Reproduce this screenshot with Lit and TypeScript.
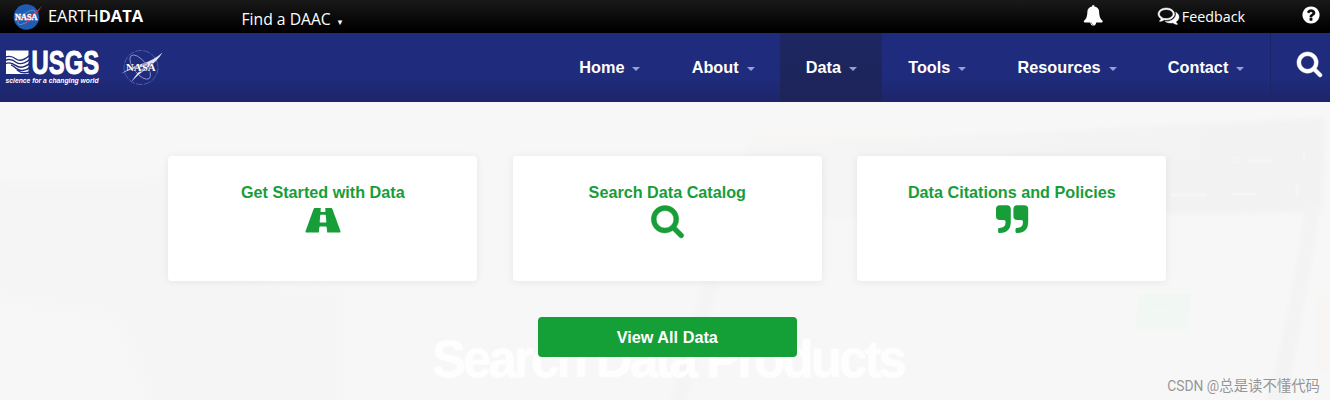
import { LitElement, html, svg, css } from "lit";
import { customElement } from "lit/decorators.js";

const PATHS = {
  search:
    "M1216 832q0-185-131.5-316.5t-316.5-131.5-316.5 131.5-131.5 316.5 131.5 316.5 316.5 131.5 316.5-131.5 131.5-316.5zm512 832q0 52-38 90t-90 38q-54 0-90-38l-343-342q-179 124-399 124-143 0-273.5-55.5t-225-150-150-225-55.5-273.5 55.5-273.5 150-225 225-150 273.5-55.5 273.5 55.5 225 150 150 225 55.5 273.5q0 220-124 399l343 343q37 37 37 90z",
  bell:
    "M912 1696q0-16-16-16-59 0-101.5-42.5t-42.5-101.5q0-16-16-16t-16 16q0 73 51.5 124.5t124.5 51.5q16 0 16-16zm816-288q0 52-38 90t-90 38h-448q0 106-75 181t-181 75-181-75-75-181h-448q-52 0-90-38t-38-90q50-42 91-88t85-119.5 74.5-158.5 50-206 19.5-260q0-152 117-282.5t307-158.5q-8-19-8-39 0-40 28-68t68-28 68 28 28 68q0 20-8 39 190 28 307 158.5t117 282.5q0 139 19.5 260t50 206 74.5 158.5 85 119.5 91 88z",
  comments:
    "M704 384q-153 0-286 52t-211.5 141-78.5 191q0 82 53 158t149 132l97 56-35 84q34-20 62-39l44-31 53 10q78 14 153 14 153 0 286-52t211.5-141 78.5-191-78.5-191-211.5-141-286-52zm0-128q191 0 353.5 68.5t256.5 186.5 94 257-94 257-256.5 186.5-353.5 68.5q-86 0-176-16-124 88-278 128-36 9-86 16h-3q-11 0-20.5-8t-11.5-21q-1-3-1-6.5t.5-6.5 2-6l2.5-5 3.5-5.5 4-5 4.5-5 4-4.5q5-6 23-25t26-29.5 22.5-29 25-38.5 20.5-44q-124-72-195-177t-71-224q0-139 94-257t256.5-186.5 353.5-68.5zm822 1169q10 24 20.5 44t25 38.5 22.5 29 26 29.5 23 25q1 1 4 4.5t4.5 5 4 5 3.5 5.5l2.5 5 2 6 .5 6.5-1 6.5q-3 14-13 22t-22 7q-50-7-86-16-154-40-278-128-90 16-176 16-271 0-472-132 58 4 88 4 161 0 309-45t264-129q125-92 192-212t67-254q0-77-23-152 129 71 204 178t75 230q0 120-71 224.5t-195 176.5z",
  help:
    "M1024 1376v-192q0-14-9-23t-23-9h-192q-14 0-23 9t-9 23v192q0 14 9 23t23 9h192q14 0 23-9t9-23zm256-672q0-88-55.5-163t-138.5-116-170-41q-243 0-371 213-15 24 8 42l132 100q7 6 19 6 16 0 25-12 53-68 86-92 34-24 86-24 48 0 85.5 26t37.5 59q0 38-20 61t-68 45q-63 28-115.5 86.5t-52.5 125.5v36q0 14 9 23t23 9h192q14 0 23-9t9-23q0-19 21.5-49.5t54.5-49.5q32-18 49-28.5t46-35 44.5-48 28-60.5 12.5-81zm384 192q0 209-103 385.5t-279.5 279.5-385.5 103-385.5-103-279.5-279.5-103-385.5 103-385.5 279.5-279.5 385.5-103 385.5 103 279.5 279.5 103 385.5z",
};

const icon = (name: keyof typeof PATHS, size: number, stroke = 0) => html`
  <svg width=${size} height=${size} viewBox="0 0 1792 1792" overflow="visible" fill="currentColor" stroke="currentColor" stroke-width=${stroke}><path d=${PATHS[name]} /></svg>
`;

const roadIcon = html`
  <svg width="36" height="33" viewBox="0 0 36 33" fill="currentColor">
    <path fill-rule="evenodd" d="M9.6 3H15.8L15.5 6.2Q15.5 7 16.3 7H19.7Q20.5 7 20.5 6.2L20.2 3H26.4Q27 3 27.3 3.8L35.4 26Q35.9 27.6 34.8 27.6H22.2L21.7 22.4Q21.6 21.4 20.7 21.4H15.3Q14.4 21.4 14.3 22.4L13.8 27.6H1.2Q.1 27.6 .6 26L8.7 3.8Q9 3 9.6 3ZM15.9 9.7Q15.2 9.7 15.2 10.4L14.7 16.4Q14.6 17.6 15.4 17.6H20.6Q21.4 17.6 21.3 16.4L20.8 10.4Q20.8 9.7 20.1 9.7Z" />
  </svg>
`;

const quoteIcon = html`
  <svg width="34" height="33" viewBox="0 0 34 33" fill="currentColor">
    <path d="M4.8.2H12Q15.8.2 15.8 4.2V16.8Q15.8 27.8 5 28H4.3Q3.1 28 3.1 26.8V24.2Q3.1 23 4.3 23Q10.6 22.8 10.6 17Q10.6 15 8.9 15H4.8Q1 15 1 11.2V4.2Q1 .2 4.8.2Z" />
    <path d="M22.2.2H29.4Q33.2.2 33.2 4.2V16.8Q33.2 27.8 22.4 28H21.7Q20.5 28 20.5 26.8V24.2Q20.5 23 21.7 23Q28 22.8 28 17Q28 15 26.3 15H22.2Q18.4 15 18.4 11.2V4.2Q18.4.2 22.2.2Z" />
  </svg>
`;

const nasaBadge = html`
  <svg width="32" height="26" viewBox="0 0 32 26">
    <circle cx="13.4" cy="13" r="12.7" fill="#1d5cb0" />
    <ellipse cx="13.4" cy="13" rx="10.5" ry="4" fill="none" stroke="#7fa6de" stroke-width=".6" transform="rotate(-38 14 13)" />
    <path d="M.5 18.5Q9 14 18 10.8Q24 8 29 1.5Q25 9.5 18 14.5Q15 17.5 12.5 21.5Q13.5 17 16.5 13Q9 15.5 .5 18.5Z" fill="#d8304a" />
    <text x="2" y="15.7" font-family="Liberation Serif, serif" font-weight="700" font-size="7.8" textLength="22.5" lengthAdjust="spacingAndGlyphs" fill="#fff" stroke="#fff" stroke-width=".3">NASA</text>
  </svg>
`;

const usgsLogo = html`
  <svg width="96" height="40" viewBox="0 0 96 40">
    <rect x="1" y="2.5" width="22.5" height="23.5" fill="#fff" />
    <g fill="none" stroke="#1f2b7d" stroke-width="1.4">
      <path d="M0 9.4C4 7.4 7 8 11 11S19 12.5 25 7" />
      <path d="M0 12.6C4 10.6 7 11.2 11 14.2S19 16 25 11.2" />
      <path d="M0 15.8C4 13.8 7 14.6 11 17.6S19 19.7 25 15.4" />
      <path d="M6 16.8C9 18 10 20 13 21.5S21 22.6 25 19.4" />
      <path d="M12 22C15 24.6 20 25.6 25 23.6" />
    </g>
    <text x="26.6" y="26" font-family="Liberation Sans, sans-serif" font-weight="700" font-size="32.5" textLength="67.5" lengthAdjust="spacingAndGlyphs" fill="#fff" stroke="#fff" stroke-width="1">USGS</text>
    <text x=".6" y="35" font-family="Liberation Sans, sans-serif" font-weight="700" font-style="italic" font-size="8" textLength="93" lengthAdjust="spacingAndGlyphs" fill="#fff">science for a changing world</text>
  </svg>
`;

const nasaOutline = html`
  <svg width="44" height="38" viewBox="0 0 44 38">
    <circle cx="20" cy="19.5" r="17" fill="none" stroke="#5d68af" stroke-width=".8" stroke-dasharray="7 1.2" />
    <ellipse cx="19" cy="19.5" rx="14.5" ry="6.5" fill="none" stroke="#8d96cd" stroke-width=".9" transform="rotate(52 19.5 19.5)" />
    <path d="M.5 25.5Q9 19 22 15.5Q33 12 41.5 4.5Q36 14 25 21Q17 26.5 10 34Q15 26 23 18.5Q9 21 .5 25.5Z" fill="#dfe2f5" />
    <text x="5" y="23" font-family="Liberation Serif, serif" font-weight="700" font-size="10.5" textLength="29.5" lengthAdjust="spacingAndGlyphs" fill="#fff" stroke="#1f2b7d" stroke-width=".9" paint-order="stroke">NASA</text>
  </svg>
`;

const backdrop = html`
  <svg class="backdrop" viewBox="0 0 1330 298" preserveAspectRatio="none">
    <defs>
      <filter id="soft"><feGaussianBlur stdDeviation="2.5" /></filter>
      <filter id="softer"><feGaussianBlur stdDeviation="9" /></filter>
      <linearGradient id="band" x1="0" x2="1">
        <stop offset="0" stop-color="#f5f5f5" />
        <stop offset="1" stop-color="#f2f2f3" />
      </linearGradient>
    </defs>
    ${svg`
      <g filter="url(#softer)">
        <path d="M-20 80H170V180L340 190V320H160L120 215L-20 190Z" fill="#f6f5f5" />
        <rect x="750" y="38" width="180" height="28" fill="#f8f5f3" />
      </g>
      <g filter="url(#soft)">
        <path d="M745 45L1325 16L1322 110L822 116V72H745Z" fill="url(#band)" />
        <path d="M1168 62L1310 58V108L1168 110Z" fill="#f1f1f1" opacity=".6" />
        <path d="M1306 100H1321Q1306 200 1286 300H1267Q1293 200 1306 100Z" fill="#f3f3f3" />
        <path d="M704 178H720L686 300H670Z" fill="#f4f4f4" />
        <rect x="1318" y="196" width="20" height="72" fill="#f8f5f2" />
      </g>
      <path d="M1140 192H1191L1187 227H1135Z" fill="#f1f7f3" />
      <path d="M1152 208H1170" stroke="#f4f8f5" stroke-width="4" />
      <g fill="none" stroke="#f6f6f6" stroke-width="3" stroke-linecap="round">
        <path d="M1249 59H1272M1172 93H1205M1232 92H1255M1297 84V92M1304 52V58" />
        <circle cx="1237" cy="58" r="3" stroke-width="1.5" />
      </g>
    `}
  </svg>
`;

@customElement("site-topbar")
export class SiteTopbar extends LitElement {
  static styles = css`
    :host { display: block; }
    .bar {
      display: flex; align-items: center; height: 33px; box-sizing: border-box;
      padding: 0 9px 0 13px; color: #fff;
      background: linear-gradient(#191919, #000 90%);
      font-family: "Open Sans", "Noto Sans", sans-serif;
    }
    svg { display: block; flex: none; }
    .brand { margin-left: 3px; width: 193.5px; font-size: 16.4px; line-height: 30px; margin-top: -1px; }
    .brand b { font-weight: 700; }
    .daac { font-size: 15.7px; line-height: 24px; padding-top: 7px; flex: 1; }
    .tri { font-size: 9px; margin-left: 3px; font-family: "DejaVu Sans", sans-serif; }
    .bell { margin-right: 54px; margin-top: -2px; }
    .feedback { display: flex; align-items: center; gap: 3px; font-size: 14.3px; margin-right: 56px; }
    .feedback svg { margin-top: -3px; }
    .help { margin-top: -3px; }
  `;
  render() {
    return html`
      <div class="bar">
        ${nasaBadge}
        <div class="brand">EARTH<b>DATA</b></div>
        <div class="daac">Find a DAAC <span class="tri">▾</span></div>
        <div class="bell">${icon("bell", 20.5)}</div>
        <div class="feedback">${icon("comments", 21, 40)}<span>Feedback</span></div>
        <div class="help">${icon("help", 20)}</div>
      </div>
    `;
  }
}

@customElement("site-nav")
export class SiteNav extends LitElement {
  static styles = css`
    :host { display: block; }
    .nav {
      display: flex; height: 69px; color: #fff;
      background: linear-gradient(#1f2b7e, #1f2b7c 65%, #1d2569);
      font: 700 16.25px "Liberation Sans", Arial, sans-serif;
    }
    svg { display: block; }
    .logos { display: flex; gap: 19.5px; padding: 15px 0 0 5px; flex: 1; }
    .item { display: flex; align-items: center; gap: 8px; padding: 0 25.2px 0 26px; box-sizing: border-box; }
    .item.active { background: linear-gradient(#1e2762, #1d2459); }
    .caret { border: 4.5px solid transparent; border-top-color: #98a0cf; border-bottom: 0; margin-top: 2px; }
    .find { width: 60.5px; box-sizing: border-box; border-left: 1px solid #1b2467; padding: 17px 0 0 25px; }
  `;
  private items = ["Home", "About", "Data", "Tools", "Resources", "Contact"];
  render() {
    return html`
      <nav class="nav">
        <div class="logos">${usgsLogo}${nasaOutline}</div>
        ${this.items.map(
          (t) => html`<div class="item ${t === "Data" ? "active" : ""}"><span>${t}</span><i class="caret"></i></div>`
        )}
        <div class="find">${icon("search", 27, 30)}</div>
      </nav>
    `;
  }
}

@customElement("app-root")
export class AppRoot extends LitElement {
  static styles = css`
    :host { display: block; }
    .page { height: 400px; overflow: hidden; font-family: "Liberation Sans", Arial, sans-serif; }
    .hero { position: relative; height: 298px; background: #f7f7f7; overflow: hidden; }
    .backdrop { position: absolute; inset: 0; width: 100%; height: 100%; }
    .ghost {
      position: absolute; left: 6px; right: 0; top: 228px; text-align: center;
      font-size: 51px; line-height: 60px; font-weight: 700; color: #fefefe; letter-spacing: -2.9px; white-space: nowrap;
      text-shadow: 0 0 2px #fefefe;
    }
    .content { position: relative; display: flex; flex-direction: column; align-items: center; gap: 36px; padding: 54px 0 0 4.6px; }
    .cards { display: grid; grid-template-columns: repeat(3, 309px); gap: 35.5px; }
    .card {
      height: 125px; box-sizing: border-box; padding-top: 25px; background: #fff; border-radius: 4px;
      box-shadow: 0 1px 8px rgba(0, 0, 0, 0.07);
      display: flex; flex-direction: column; align-items: center; color: #189e39;
    }
    .title { font-size: 16.2px; line-height: 22px; font-weight: 700; margin-bottom: 2px; white-space: nowrap; }
    .card svg { display: block; }
    .card.lens svg { margin-top: -2.5px; }
    .button {
      width: 259px; height: 40px; border-radius: 4px; background: #159f37; color: #fff;
      font-size: 16.25px; line-height: 40px; font-weight: 700; text-align: center;
    }
    .mark {
      position: absolute; right: 10px; bottom: 5px; font: 14.4px/20px "Noto Sans CJK SC", sans-serif;
      color: #959595; white-space: nowrap; text-shadow: 0 0 1px #fff;
    }
    .latin { font: 13.8px Roboto, sans-serif; }
  `;
  render() {
    const cards = [
      { title: "Get Started with Data", art: roadIcon, kind: "" },
      { title: "Search Data Catalog", art: icon("search", 35, 20), kind: "lens" },
      { title: "Data Citations and Policies", art: quoteIcon, kind: "" },
    ];
    return html`
      <div class="page">
        <site-topbar></site-topbar>
        <site-nav></site-nav>
        <main class="hero">
          ${backdrop}
          <div class="ghost">Search Data Products</div>
          <div class="content">
            <div class="cards">
              ${cards.map((c) => html`<div class="card ${c.kind}"><div class="title">${c.title}</div>${c.art}</div>`)}
            </div>
            <div class="button">View All Data</div>
          </div>
          <div class="mark"><span class="latin">CSDN @</span>总是读不懂代码</div>
        </main>
      </div>
    `;
  }
}
